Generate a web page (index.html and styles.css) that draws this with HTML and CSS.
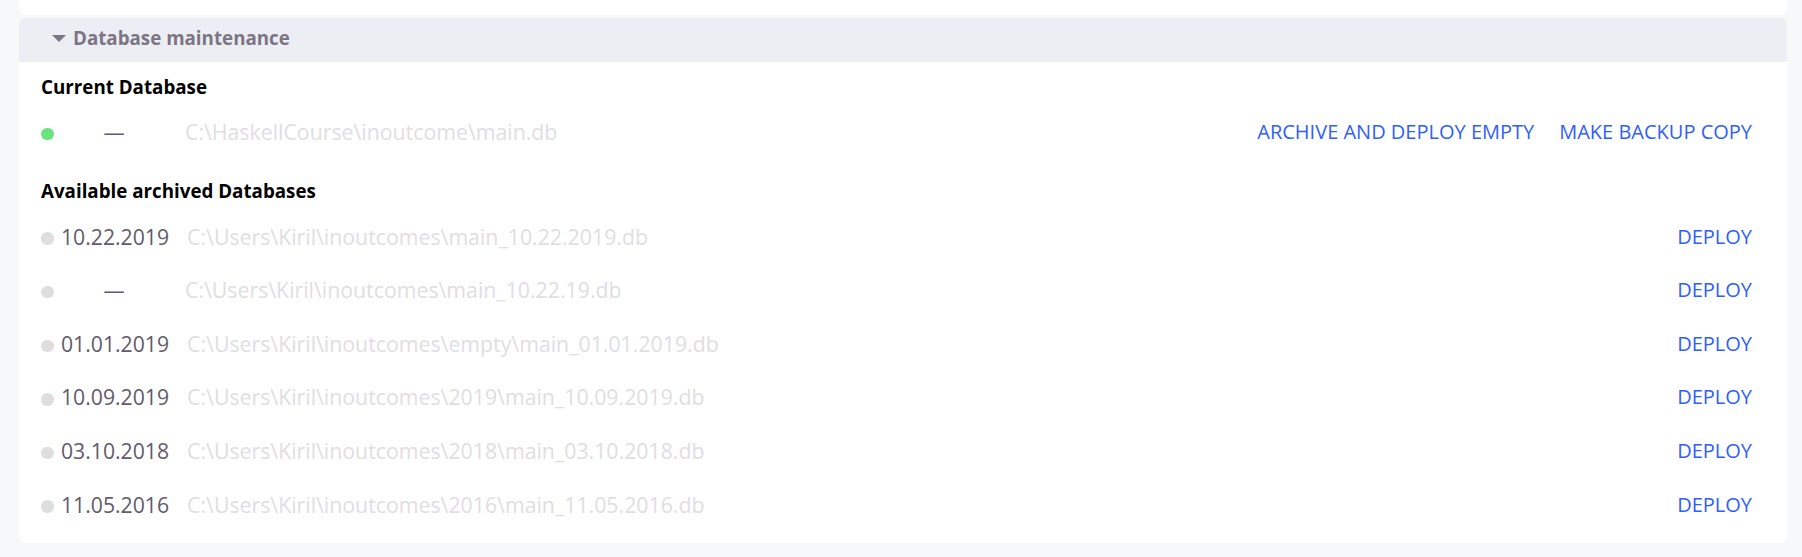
FILE: index.html
```html
<!DOCTYPE html>
<html lang="en">
<head>
<meta charset="utf-8">
<title>Database maintenance</title>
<link rel="stylesheet" href="styles.css">
</head>
<body>
<div class="page">
  <div class="card card-top"></div>
  <section class="card panel">
    <div class="panel-head"><span class="caret"></span><span class="panel-title">Database maintenance</span></div>
    <div class="panel-body">
      <h3 class="title first">Current Database</h3>
      <div class="row">
        <span class="dot dot-on"></span>
        <span class="date">—</span>
        <span class="path">C:\HaskellCourse\inoutcome\main.db</span>
        <span class="actions">
          <a class="btn">Archive and deploy empty</a>
          <a class="btn">Make backup copy</a>
        </span>
      </div>
      <h3 class="title">Available archived Databases</h3>
      <div class="row">
        <span class="dot"></span>
        <span class="date">10.22.2019</span>
        <span class="path">C:\Users\Kiril\inoutcomes\main_10.22.2019.db</span>
        <span class="actions"><a class="btn">Deploy</a></span>
      </div>
      <div class="row">
        <span class="dot"></span>
        <span class="date">—</span>
        <span class="path">C:\Users\Kiril\inoutcomes\main_10.22.19.db</span>
        <span class="actions"><a class="btn">Deploy</a></span>
      </div>
      <div class="row">
        <span class="dot"></span>
        <span class="date">01.01.2019</span>
        <span class="path">C:\Users\Kiril\inoutcomes\empty\main_01.01.2019.db</span>
        <span class="actions"><a class="btn">Deploy</a></span>
      </div>
      <div class="row">
        <span class="dot"></span>
        <span class="date">10.09.2019</span>
        <span class="path">C:\Users\Kiril\inoutcomes\2019\main_10.09.2019.db</span>
        <span class="actions"><a class="btn">Deploy</a></span>
      </div>
      <div class="row">
        <span class="dot"></span>
        <span class="date">03.10.2018</span>
        <span class="path">C:\Users\Kiril\inoutcomes\2018\main_03.10.2018.db</span>
        <span class="actions"><a class="btn">Deploy</a></span>
      </div>
      <div class="row">
        <span class="dot"></span>
        <span class="date">11.05.2016</span>
        <span class="path">C:\Users\Kiril\inoutcomes\2016\main_11.05.2016.db</span>
        <span class="actions"><a class="btn">Deploy</a></span>
      </div>
    </div>
  </section>
</div>
</body>
</html>
```

FILE: styles.css
```css
html, body {
  margin: 0;
  padding: 0;
  background: #f7f8fa;
  font-family: "Open Sans", "Noto Sans", sans-serif;
}

.page {
  padding: 0 15px 0 19px;
  display: flex;
  flex-direction: column;
  gap: 3px;
}

.card {
  background: #ffffff;
}

.card-top {
  height: 15px;
  border-radius: 0 0 6px 6px;
}

.panel {
  border-radius: 6px;
  overflow: hidden;
  height: 525px;
  display: flex;
  flex-direction: column;
}

.panel-head {
  height: 44px;
  background: #edeef3;
  display: flex;
  align-items: center;
  padding-left: 33px;
  padding-bottom: 6px;
  box-sizing: border-box;
  gap: 7px;
  color: #7b7585;
  font-weight: 700;
  font-size: 18.75px;
}

.caret {
  width: 0;
  height: 0;
  border-left: 7px solid transparent;
  border-right: 7px solid transparent;
  border-top: 7px solid #7b7585;
  margin-top: 3px;
}

.panel-body {
  padding: 12.5px 35px 0 22px;
  display: flex;
  flex-direction: column;
}

.title {
  margin: 20.6px 0 6.3px;
  font-size: 18.75px;
  font-weight: 700;
  line-height: 24px;
  color: #000;
}

.title.first {
  margin-top: 0;
  margin-bottom: 6.3px;
}

.row {
  height: 53.6px;
  display: flex;
  align-items: center;
}

.dot {
  width: 12.5px;
  height: 12.5px;
  border-radius: 50%;
  background: #dedede;
  flex: none;
  margin-right: 7.5px;
  margin-top: 5px;
}

.dot-on {
  background: #69e37b;
}

.date {
  min-width: 106px;
  text-align: center;
  font-size: 21.2px;
  color: #615b6d;
  margin-right: 18px;
  flex: none;
}

.path {
  font-size: 21.3px;
  color: #dfdee2;
  flex: 1;
  white-space: nowrap;
}

.actions {
  display: flex;
  gap: 25px;
}

.btn {
  font-size: 20px;
  text-transform: uppercase;
  color: #2f5eff;
  cursor: pointer;
}
```
